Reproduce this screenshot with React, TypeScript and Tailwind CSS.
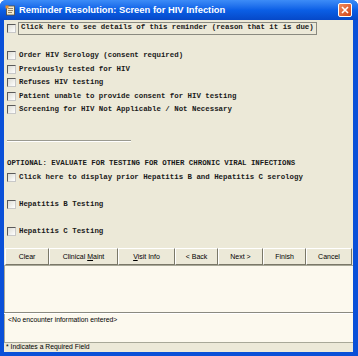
import React from "react";

const mono = { fontFamily: '"Liberation Mono", "Courier New", monospace' };
const sans = { fontFamily: '"Liberation Sans", Arial, sans-serif' };

function Box() {
  return (
    <span className="block h-[9px] w-[9px] shrink-0 border border-t-[#5a5a5a] border-l-[#5a5a5a] border-r-[#c8c8c8] border-b-[#c8c8c8] bg-gradient-to-br from-[#dcdcd4] to-white" />
  );
}

function Row({ label, top }: { label: string; top: string }) {
  return (
    <div className={`flex h-[13.5px] items-center gap-[3px] pl-[3px] ${top}`}>
      <Box />
      <span className="text-[7.4px] font-bold leading-none text-[#1a1a1a] whitespace-nowrap" style={mono}>
        {label}
      </span>
    </div>
  );
}

const BUTTONS: { label: React.ReactNode; w: string }[] = [
  { label: "Clear", w: "w-[44px]" },
  { label: <>Clinical <u>M</u>aint</>, w: "w-[69px]" },
  { label: <><u>V</u>isit Info</>, w: "w-[57px]" },
  { label: "< Back", w: "w-[43px]" },
  { label: "Next >", w: "w-[45px]" },
  { label: "Finish", w: "w-[43px]" },
  { label: "Cancel", w: "w-[46px]" },
];

export default function App() {
  return (
    <div className="flex h-[356px] w-[358px] flex-col overflow-hidden rounded-t-[6px] bg-[#0a50d8]">
      {/* Title bar */}
      <div className="flex h-[20px] shrink-0 items-center bg-gradient-to-b from-[#3d8cf7] via-[#0b5fe6] to-[#0648c8] pl-[5px] pr-[6px]">
        <svg width="11" height="11" viewBox="0 0 11 11" className="shrink-0">
          <rect x="1.5" y="1" width="8" height="9" fill="#f3ecd0" stroke="#5a4a30" strokeWidth="0.8" />
          <path d="M3 3.5h5M3 5.5h5M3 7.5h4" stroke="#7a6a50" strokeWidth="0.8" />
          <rect x="0.5" y="0.5" width="3" height="3" fill="#e89030" />
        </svg>
        <span className="ml-[3px] text-[9.4px] font-bold leading-none text-white whitespace-nowrap" style={sans}>
          Reminder Resolution: Screen for HIV Infection
        </span>
        <div className="ml-auto flex h-[14px] w-[14px] items-center justify-center rounded-[2px] border border-white bg-gradient-to-br from-[#f08a5a] to-[#d04010]">
          <svg width="8" height="8" viewBox="0 0 8 8">
            <path d="M1 1L7 7M7 1L1 7" stroke="white" strokeWidth="1.6" />
          </svg>
        </div>
      </div>

      {/* Client area */}
      <div className="ml-[4px] mr-[5px] mb-[4px] flex flex-1 flex-col bg-[#ece9d8]">
        {/* Checklist */}
        <div className="flex flex-1 flex-col">
          <div className="mt-[1px] flex h-[14px] items-center gap-[2px] pl-[3px]">
            <Box />
            <div className="flex h-[13px] w-[299px] items-center border border-[#8a8a80] px-[2px]">
              <span className="text-[7.4px] font-bold leading-none text-[#1a1a1a] whitespace-nowrap" style={mono}>
                Click here to see details of this reminder (reason that it is due)
              </span>
            </div>
          </div>
          <Row label="Order HIV Serology (consent required)" top="mt-[14px]" />
          <Row label="Previously tested for HIV" top="" />
          <Row label="Refuses HIV testing" top="" />
          <Row label="Patient unable to provide consent for HIV testing" top="" />
          <Row label="Screening for HIV Not Applicable / Not Necessary" top="" />
          <div className="ml-[3px] mt-[23px] h-[2px] w-[124px] border-t border-b border-t-[#9a9a90] border-b-white" />
          <div className="mt-[15.5px] flex h-[13.5px] items-center pl-[3px]">
            <span className="text-[7.4px] font-bold leading-none text-[#1a1a1a] whitespace-nowrap" style={mono}>
              OPTIONAL: EVALUATE FOR TESTING FOR OTHER CHRONIC VIRAL INFECTIONS
            </span>
          </div>
          <Row label="Click here to display prior Hepatitis B and Hepatitis C serology" top="" />
          <Row label="Hepatitis B Testing" top="mt-[13.5px]" />
          <Row label="Hepatitis C Testing" top="mt-[13.5px]" />
        </div>

        {/* Buttons */}
        <div className="flex h-[17px] shrink-0 items-stretch pl-[1px]">
          {BUTTONS.map((b, i) => (
            <div
              key={i}
              className={`${b.w} flex items-center justify-center border border-t-white border-l-white border-r-[#7a7868] border-b-[#7a7868] bg-[#ece9d8] text-[7px] leading-none text-black`}
              style={sans}
            >
              <span>{b.label}</span>
            </div>
          ))}
        </div>

        {/* Notes area */}
        <div className="h-[47px] shrink-0 border-l border-t border-[#a8a898] bg-[#fcf9ee]" />
        <div className="h-[2px] shrink-0 border-t border-b border-t-[#8a8a80] border-b-white bg-[#ece9d8]" />
        <div className="h-[28px] shrink-0 border-l border-[#a8a898] bg-[#fcf9ee] pl-[3px] pt-[3px]">
          <span className="block text-[6.8px] leading-none text-black" style={sans}>
            &lt;No encounter information entered&gt;
          </span>
        </div>
        <div className="flex h-[10px] shrink-0 items-center border-t border-[#a8a898] pl-[2px]">
          <span className="text-[6.8px] leading-none text-black" style={sans}>
            * Indicates a Required Field
          </span>
        </div>
      </div>
    </div>
  );
}
